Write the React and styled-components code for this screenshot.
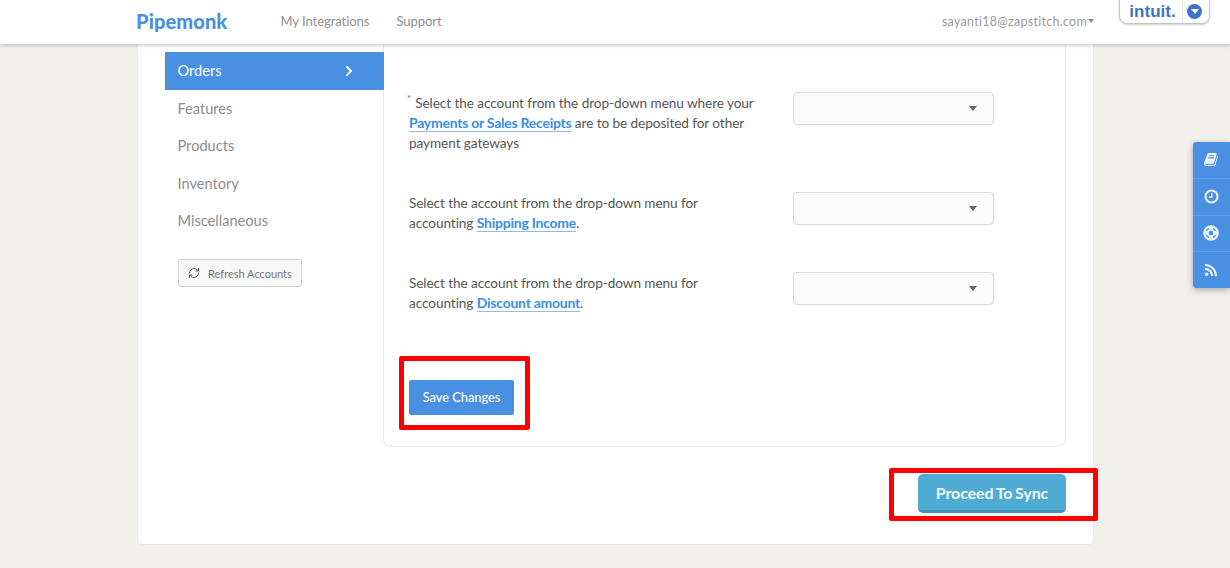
import React from 'react';
import styled, { createGlobalStyle } from 'styled-components';
import { FaRss, FaChevronRight } from 'react-icons/fa';
import { LuRefreshCw } from 'react-icons/lu';

const Global = createGlobalStyle`
  html, body { margin: 0; padding: 0; background: #f1f0ec; }
  body { font-family: Lato, "Open Sans", sans-serif; overflow: hidden; }
  * { box-sizing: border-box; }
`;

const Page = styled.div`
  position: relative;
  width: 1230px;
  height: 568px;
  overflow: hidden;
`;
const Header = styled.header`
  position: relative;
  z-index: 3;
  height: 44px;
  background: #fff;
  box-shadow: 0 1px 4px rgba(0, 0, 0, 0.25);
  display: flex;
  align-items: center;
  padding: 0 0 2px 136px;
`;
const Logo = styled.div`
  font-size: 20px;
  font-weight: 900;
  color: #4a90e2;
  width: 144.5px;
  letter-spacing: 0.1px;
`;
const NavLink = styled.a`
  font-size: 13px;
  letter-spacing: -0.05px;
  color: #8f8f8f;
  margin-right: 27px;
`;
const UserMenu = styled.div`
  margin-left: auto;
  margin-right: 136px;
  font-size: 12.5px;
  letter-spacing: 0.28px;
  color: #9a9a9a;
  display: flex;
  align-items: center;
  gap: 1px;
`;
const Caret = styled.span`
  width: 0;
  height: 0;
  border-left: 3.5px solid transparent;
  border-right: 3.5px solid transparent;
  border-top: 4px solid #8a8a8a;
`;
const IntuitBadge = styled.div`
  position: absolute;
  top: -2px;
  left: 1119px;
  width: 91px;
  height: 26px;
  background: #fff;
  border: 1px solid #c4c4c4;
  border-radius: 0 0 8px 8px;
  box-shadow: 0 1px 2px rgba(0, 0, 0, 0.2);
  display: flex;
  align-items: center;
`;
const IntuitText = styled.span`
  width: 63px;
  height: 100%;
  border-right: 1px solid #e6e6e6;
  text-align: center;
  font-family: "Liberation Sans", sans-serif;
  font-size: 17px;
  font-weight: 700;
  line-height: 26px;
  color: #3f72c9;
  padding-left: 3px;
`;
const IntuitToggle = styled.span`
  margin-left: 4px;
  width: 15px;
  height: 15px;
  border-radius: 50%;
  background: #3f72c9;
  display: flex;
  align-items: center;
  justify-content: center;
  &::after {
    content: '';
    border-left: 4px solid transparent;
    border-right: 4px solid transparent;
    border-top: 5px solid #fff;
    margin-top: 1px;
  }
`;
const Card = styled.main`
  margin-left: 137px;
  width: 957px;
  height: 501px;
  background: #fff;
  border: 1px solid #e8e8e4;
  border-top: 0;
  border-radius: 0 0 5px 5px;
  padding: 0 27px;
`;
const Columns = styled.div`
  display: flex;
  align-items: flex-start;
`;
const Sidebar = styled.aside`
  width: 219px;
  padding-top: 8px;
  position: relative;
  z-index: 1;
`;
const SideItem = styled.div`
  height: 37.5px;
  display: flex;
  align-items: center;
  justify-content: space-between;
  padding: 0 29px 0 12.5px;
  font-size: 14.6px;
  color: ${p => (p.$active ? '#fff' : '#8d8d8d')};
  background: ${p => (p.$active ? '#4a90e2' : 'transparent')};
`;
const RefreshButton = styled.button`
  margin: 19.5px 0 0 13px;
  width: 124px;
  height: 28px;
  display: flex;
  align-items: center;
  gap: 8px;
  padding: 0 0 0 9px;
  background: #f8f8f8;
  border: 1px solid #cfcfcf;
  border-radius: 3px;
  font-family: inherit;
  font-size: 11px;
  color: #777;
  svg { color: #555; }
`;
const Panel = styled.section`
  width: 683px;
  height: 403px;
  margin-left: -1px;
  padding: 48px 25px 0 25px;
  border: 1px solid #e9e9e9;
  border-top: 0;
  border-radius: 0 0 8px 8px;
`;
const FormRow = styled.div`
  display: flex;
  align-items: flex-start;
  justify-content: space-between;
  width: 585px;
  margin-bottom: ${p => p.$gap}px;
`;
const Label = styled.p`
  margin: 1px 0 0;
  width: 352px;
  font-size: 13.6px;
  letter-spacing: -0.07px;
  line-height: 20px;
  color: #555;
`;
const Required = styled.sup`
  color: #e0455a;
  font-size: 10px;
  line-height: 0;
  margin-left: -2px;
  margin-right: 4px;
`;
const DocLink = styled.a`
  color: #3a8ee8;
  font-size: 14px;
  font-weight: 700;
  letter-spacing: -0.25px;
  border-bottom: 1px solid #8cbcf0;
`;
const Select = styled.div`
  width: 201px;
  height: 33px;
  background: #fafafa;
  border: 1px solid #d9d9d9;
  border-radius: 4px;
  display: flex;
  align-items: center;
  justify-content: flex-end;
  padding-right: 16px;
  &::after {
    content: '';
    border-left: 4.5px solid transparent;
    border-right: 4.5px solid transparent;
    border-top: 5px solid #666;
  }
`;
const SaveButton = styled.button`
  display: block;
  width: 105px;
  height: 35px;
  padding: 0 0 2px;
  border: 0;
  border-radius: 2px;
  background: #4a90e2;
  color: #fff;
  font-family: inherit;
  font-size: 12.8px;
  font-weight: 500;
`;
const Footer = styled.div`
  display: flex;
  justify-content: flex-end;
  margin-top: 27px;
`;
const SyncButton = styled.button`
  width: 148px;
  height: 39px;
  padding: 0;
  border: 0;
  border-bottom: 3px solid #4290b5;
  border-radius: 5px;
  background: #4eabd4;
  color: #f2f9fc;
  font-family: inherit;
  font-size: 16px;
  font-weight: 700;
  letter-spacing: -0.12px;
  word-spacing: -1px;
`;
const Highlight = styled.div`
  position: absolute;
  z-index: 2;
  border: 5px solid #fe0000;
  border-radius: 2px;
  left: ${p => p.$x}px;
  top: ${p => p.$y}px;
  width: ${p => p.$w}px;
  height: ${p => p.$h}px;
`;
const SideTabs = styled.nav`
  position: absolute;
  z-index: 2;
  right: 0;
  top: 142px;
  width: 37px;
  height: 146px;
  background: #4a90e2;
  border-radius: 3px 0 0 3px;
  box-shadow: 0 2px 6px rgba(0, 0, 0, 0.3);
  display: flex;
  flex-direction: column;
`;
const Tab = styled.div`
  flex: 1;
  display: flex;
  align-items: center;
  justify-content: center;
  color: #eaf3fc;
  padding-right: 1px;
  & + & { border-top: 1px solid #5c9be6; }
`;

const BookIcon = () => (
  <svg width="15" height="15" viewBox="0 0 1792 1792" fill="currentColor">
    <path d="M1639 478q40 57 18 129l-275 906q-19 64-76.5 107.5t-122.5 43.5h-923q-77 0-148.5-53.5t-99.5-131.5q-24-67-2-127 0-4 3-27t4-37q1-8-3-21.5t-3-19.5q2-11 8-21t16.5-23.5 16.5-23.5q23-38 45-91.5t30-91.5q3-10 .5-30t-.5-28q3-11 17-28t17-23q21-36 42-92t25-90q1-9-2.5-32t.5-28q4-13 22-30.5t22-22.5q19-26 42.5-84.5t27.5-96.5q1-8-3-25.5t-2-26.5q2-8 9-18t18-23 17-21q8-12 16.5-30.5t15-35 16-36 19.5-32 26.5-23.5 36-11.5 47.5 5.5l-1 3q38-9 51-9h761q74 0 114 56t18 130l-274 906q-36 119-71.5 153.5t-128.5 34.5h-869q-27 0-38 15-11 16-1 43 24 70 144 70h923q29 0 56-15.5t35-41.5l300-987q7-22 5-57 38 15 59 43zm-1064 2q-4 13 2 22.5t20 9.5h608q13 0 25.5-9.5t16.5-22.5l21-64q4-13-2-22.5t-20-9.5h-608q-13 0-25.5 9.5t-16.5 22.5zm-83 256q-4 13 2 22.5t20 9.5h608q13 0 25.5-9.5t16.5-22.5l21-64q4-13-2-22.5t-20-9.5h-608q-13 0-25.5 9.5t-16.5 22.5z" />
  </svg>
);
const ClockIcon = () => (
  <svg width="15" height="15" viewBox="0 0 15 15" fill="none" stroke="currentColor">
    <circle cx="7.5" cy="7.5" r="6" strokeWidth="2.1" />
    <path d="M7.8 4V8H4.8" strokeWidth="1.4" />
  </svg>
);
const RingIcon = () => (
  <svg width="16" height="16" viewBox="0 0 16 16" fill="none" stroke="currentColor">
    <circle cx="8" cy="8" r="6.7" strokeWidth="2.3" />
    <circle cx="8" cy="8" r="3.2" strokeWidth="1.8" />
    <path d="M8 1.5V5M8 11V14.5M1.5 8H5M11 8H14.5" strokeWidth="4" />
  </svg>
);

export default function App() {
  return (
    <Page>
      <Global />
      <Header>
        <Logo>Pipemonk</Logo>
        <NavLink>My Integrations</NavLink>
        <NavLink>Support</NavLink>
        <UserMenu>sayanti18@zapstitch.com<Caret /></UserMenu>
        <IntuitBadge>
          <IntuitText>intuit.</IntuitText>
          <IntuitToggle />
        </IntuitBadge>
      </Header>
      <Card>
        <Columns>
          <Sidebar>
            <SideItem $active>Orders <FaChevronRight size={12} /></SideItem>
            <SideItem>Features</SideItem>
            <SideItem>Products</SideItem>
            <SideItem>Inventory</SideItem>
            <SideItem>Miscellaneous</SideItem>
            <RefreshButton><LuRefreshCw size={12} />Refresh Accounts</RefreshButton>
          </Sidebar>
          <Panel>
            <FormRow $gap={39}>
              <Label>
                <Required>*</Required>Select the account from the drop-down menu where your{' '}
                <DocLink>Payments or Sales Receipts</DocLink> are to be deposited for other payment gateways
              </Label>
              <Select />
            </FormRow>
            <FormRow $gap={39}>
              <Label>
                Select the account from the drop-down menu for accounting{' '}
                <DocLink>Shipping Income</DocLink>.
              </Label>
              <Select />
            </FormRow>
            <FormRow $gap={67}>
              <Label>
                Select the account from the drop-down menu for accounting{' '}
                <DocLink>Discount amount</DocLink>.
              </Label>
              <Select />
            </FormRow>
            <SaveButton>Save Changes</SaveButton>
          </Panel>
        </Columns>
        <Footer>
          <SyncButton>Proceed To Sync</SyncButton>
        </Footer>
      </Card>
      <Highlight $x={399} $y={356} $w={131} $h={74} />
      <Highlight $x={889} $y={468} $w={209} $h={53} />
      <SideTabs>
        <Tab><BookIcon /></Tab>
        <Tab><ClockIcon /></Tab>
        <Tab><RingIcon /></Tab>
        <Tab><FaRss size={14} /></Tab>
      </SideTabs>
    </Page>
  );
}
